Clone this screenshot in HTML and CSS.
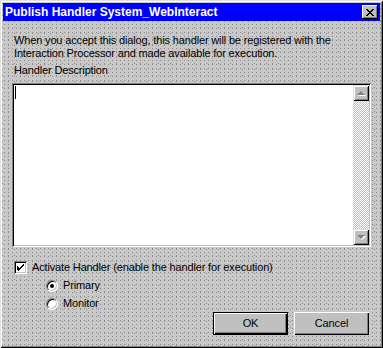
FILE: index.html
```html
<!DOCTYPE html>
<html>
	<head>
		<meta charset="UTF-8">
		<title>Publish Handler</title>
		<link rel="stylesheet" href="styles.css">
	</head>
	<body>
		<div class="window">
			<div class="titlebar">
				<span class="title">Publish Handler System_WebInteract</span>
				<a href="javascript:;" class="close">
					<svg width="8" height="7" viewBox="0 0 8 7">
						<path d="M0 0h2v1h1v1h2V1h1V0h2v1H7v1H6v1H5v1h1v1h1v1h1v1H6V6H5V5H3v1H2v1H0V6h1V5h1V4h1V3H2V2H1V1H0z" fill="#000"/>
					</svg>
				</a>
			</div>
			<div class="content">
				<p class="intro">When you accept this dialog, this handler will be registered with the<br>Interaction Processor and made available for execution.</p>
				<p class="label">Handler Description</p>
				<div class="edit">
					<div class="text"><i class="caret"></i></div>
					<div class="scroll">
						<span class="sbtn"><i class="arrow up"></i></span>
						<span class="track"></span>
						<span class="sbtn"><i class="arrow down"></i></span>
					</div>
				</div>
				<div class="check">
					<span class="box">
						<svg width="7" height="7" viewBox="0 0 7 7">
							<path d="M6 0h1v2H6v1H5v1H4v1H3v1H2v1H1V6H0V2h1v1h1v1h1V3h1V2h1V1h1z" fill="#000"/>
						</svg>
					</span>
					Activate Handler (enable the handler for execution)
				</div>
				<div class="radios">
					<div class="radio"><span class="circle on"></span>Primary</div>
					<div class="radio"><span class="circle"></span>Monitor</div>
				</div>
				<div class="buttons">
					<a href="javascript:;" class="btn default">OK</a>
					<a href="javascript:;" class="btn">Cancel</a>
				</div>
			</div>
		</div>
	</body>
</html>
```

FILE: styles.css
```css
*{
	margin: 0;
	padding: 0;
	box-sizing: border-box;
}
body{
	width: 383px;
	height: 348px;
	overflow: hidden;
	font: 11px/13px "Liberation Sans", Arial, sans-serif;
	letter-spacing: -0.15px;
	color: #000;
}
.window{
	width: 383px;
	height: 348px;
	padding: 3px;
	background:
		conic-gradient(at 1px 1px, transparent 75%, #8c8c8c 0) 0 0/4px 4px,
		conic-gradient(at 1px 1px, transparent 75%, #8c8c8c 0) 2px 3px/6px 6px,
		#c8c8c8;
	box-shadow: inset 1px 1px #dfdfdf, inset -1px -1px #000, inset 2px 2px #fff, inset -2px -2px #808080;
}
.titlebar{
	height: 18px;
	background: #0000ff;
	display: flex;
	align-items: center;
	justify-content: space-between;
	padding: 0 2px 0 2px;
}
.title{
	color: #fff;
	font-weight: bold;
	font-size: 12px;
	letter-spacing: 0;
}
.close{
	width: 16px;
	height: 14px;
	background: #c0c0c0;
	display: flex;
	align-items: center;
	justify-content: center;
	box-shadow: inset -1px -1px #000, inset 1px 1px #fff, inset -2px -2px #808080;
}
.content{
	padding: 13px 9px 0 9px;
}
.intro, .label{
	margin-left: 2px;
}
.label{
	margin-top: 4px;
}
.edit{
	margin-top: 6px;
	height: 164px;
	display: flex;
	padding: 2px;
	background: #fff;
	box-shadow: inset 1px 1px #808080, inset -1px -1px #fff, inset 2px 2px #000, inset -2px -2px #c0c0c0;
}
.text{
	flex: 1;
	padding: 1px 0 0 1px;
}
.caret{
	display: block;
	width: 1px;
	height: 13px;
	background: #000;
}
.scroll{
	width: 16px;
	display: flex;
	flex-direction: column;
}
.sbtn{
	height: 16px;
	background: #c0c0c0;
	display: flex;
	align-items: center;
	justify-content: center;
	box-shadow: inset 1px 1px #dfdfdf, inset -1px -1px #000, inset 2px 2px #fff, inset -2px -2px #808080;
}
.track{
	flex: 1;
	background: repeating-conic-gradient(#c0c0c0 0 25%, #fff 0 50%) 0 0/2px 2px;
}
.arrow{
	width: 0;
	height: 0;
	border-left: 4px solid transparent;
	border-right: 4px solid transparent;
	filter: drop-shadow(1px 1px 0 #fff);
}
.up{
	border-bottom: 4px solid #808080;
}
.down{
	border-top: 4px solid #808080;
}
.check{
	margin: 14px 0 0 2px;
	display: flex;
	align-items: center;
	gap: 5px;
}
.box{
	width: 13px;
	height: 13px;
	background: #fff;
	display: flex;
	align-items: center;
	justify-content: center;
	box-shadow: inset 1px 1px #808080, inset -1px -1px #fff, inset 2px 2px #000, inset -2px -2px #c0c0c0;
}
.radios{
	margin: 5px 0 0 34px;
	display: flex;
	flex-direction: column;
	gap: 5px;
}
.radio{
	display: flex;
	align-items: center;
	gap: 5px;
	height: 13px;
}
.circle{
	width: 12px;
	height: 12px;
	border-radius: 50%;
	background: #fff;
	border: 1px solid;
	border-color: #808080 #fff #fff #808080;
	box-shadow: inset 1px 1px #000, inset -1px -1px #c0c0c0;
	position: relative;
}
.circle.on::after{
	content: "";
	position: absolute;
	left: 3px;
	top: 3px;
	width: 4px;
	height: 4px;
	border-radius: 50%;
	background: #000;
}
.buttons{
	margin-top: 2px;
	display: flex;
	justify-content: flex-end;
	gap: 6px;
	padding-right: 2px;
}
.btn{
	width: 75px;
	height: 23px;
	line-height: 23px;
	text-align: center;
	text-decoration: none;
	color: #000;
	background: #c0c0c0;
	box-shadow: inset 1px 1px #fff, inset -1px -1px #000, inset -2px -2px #808080;
}
.btn.default{
	border: 1px solid #000;
	line-height: 21px;
	box-shadow: inset 1px 1px #fff, inset -1px -1px #000, inset -2px -2px #808080;
}
```
